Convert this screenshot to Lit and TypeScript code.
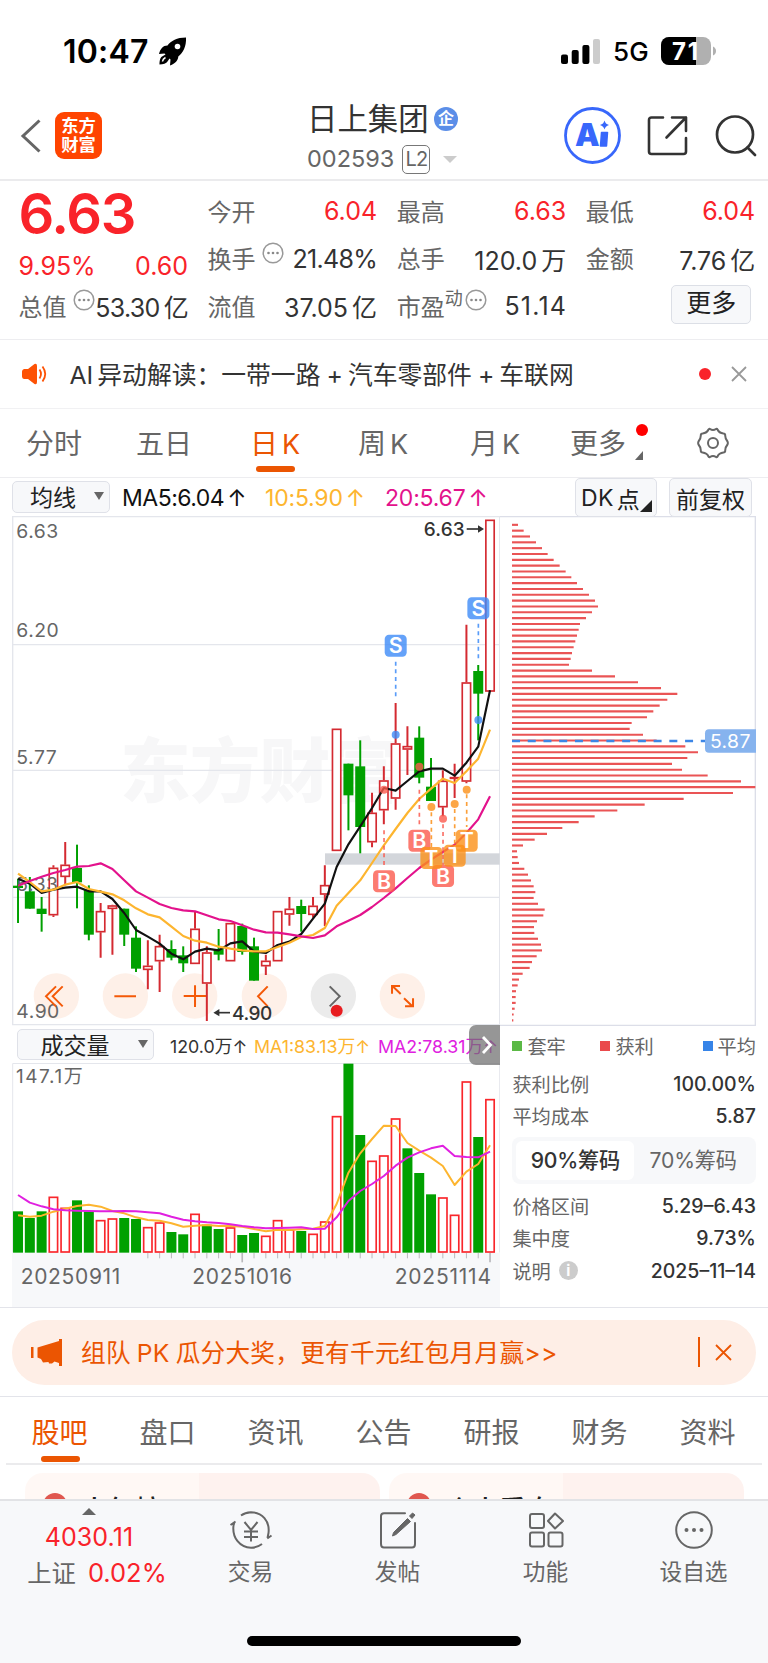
import { LitElement, html, css, svg } from "lit";
import { customElement } from "lit/decorators.js";

const baseFont = css`
  :host { display: block; font-family: Inter, "Noto Sans CJK SC", sans-serif; color: #333; }
  * { box-sizing: border-box; }
  svg { display: block; flex: none; }
  text { font-family: Inter, "Noto Sans CJK SC", sans-serif; }
`;

const STEP = 35.4;
const cx = (i: number) => 54 + STEP * i;
const line = (ys: number[]) => ys.map((y, i) => `${cx(i).toFixed(1)},${y}`).join(" ");

/* [rising, high, bodyTop, bodyBottom, low] in chart units */
const candles: [number, number, number, number, number][] = [
  [0, 1105, 1126, 1133, 1238], [0, 1100, 1143, 1195, 1195], [0, 1160, 1195, 1211, 1264], [1, 1065, 1072, 1215, 1220],
  [1, 995, 1063, 1100, 1125], [0, 1003, 1073, 1116, 1194], [0, 1125, 1138, 1273, 1290], [1, 1178, 1202, 1266, 1342],
  [1, 1183, 1185, 1196, 1333], [0, 1195, 1195, 1273, 1307], [0, 1248, 1282, 1375, 1385], [1, 1290, 1366, 1379, 1437],
  [1, 1273, 1307, 1353, 1445], [0, 1290, 1316, 1342, 1350], [0, 1308, 1335, 1359, 1385], [1, 1205, 1255, 1361, 1361],
  [1, 1308, 1326, 1420, 1532], [0, 1256, 1316, 1333, 1350], [1, 1238, 1238, 1353, 1353], [0, 1240, 1247, 1325, 1333],
  [0, 1282, 1308, 1411, 1411], [1, 1333, 1351, 1368, 1394], [1, 1202, 1202, 1353, 1353], [1, 1160, 1195, 1213, 1246],
  [0, 1168, 1187, 1211, 1264], [1, 1160, 1186, 1214, 1222], [1, 1065, 1124, 1153, 1247], [1, 655, 655, 1022, 1022],
  [0, 760, 760, 855, 960], [0, 690, 768, 950, 1029], [1, 847, 907, 996, 1011], [1, 768, 810, 900, 942],
  [1, 578, 699, 865, 898], [1, 648, 707, 718, 794], [0, 648, 682, 802, 819], [0, 743, 829, 872, 872],
  [1, 780, 811, 891, 918], [1, 760, 800, 805, 863], [1, 343, 516, 814, 819], [0, 464, 482, 550, 690], [1, 28, 28, 544, 544],
];
const ma5 = [1105, 1120, 1148, 1138, 1132, 1129, 1143, 1143, 1166, 1208, 1259, 1279, 1300, 1330, 1347, 1324, 1315, 1320, 1299, 1293, 1324, 1328, 1304, 1294, 1271, 1225, 1180, 1070, 1002, 948, 893, 833, 841, 812, 783, 775, 775, 796, 757, 709, 540];
const ma10 = [1090, 1115, 1143, 1138, 1123, 1115, 1136, 1144, 1152, 1170, 1194, 1212, 1221, 1249, 1277, 1291, 1297, 1309, 1315, 1320, 1323, 1323, 1310, 1297, 1280, 1274, 1253, 1186, 1148, 1110, 1058, 1005, 956, 908, 866, 835, 805, 818, 783, 745, 658];
const ma20 = [1126, 1112, 1099, 1088, 1079, 1069, 1067, 1059, 1076, 1110, 1143, 1162, 1181, 1193, 1200, 1203, 1215, 1227, 1232, 1245, 1258, 1266, 1267, 1272, 1278, 1283, 1275, 1248, 1231, 1214, 1190, 1163, 1134, 1103, 1073, 1048, 1025, 1003, 968, 927, 858];

/* [badge letter, x, badge y, dot y, dash start, dash end] */
const marks: [string, number, number, number, number, number][] = [
  ["S", 1187, 406, 673, 454, 566], ["S", 1435, 294, 629, 340, 452],
  ["B", 1152, 1113, 838, 960, 1070], ["B", 1258, 991, 769, 838, 950], ["B", 1329, 1097, 925, 942, 1064],
  ["T", 1294, 1043, 890, 906, 1010], ["T", 1364, 1036, 881, 896, 1000], ["T", 1400, 991, 838, 852, 950],
];
const markColor: Record<string, string> = { S: "#3d8bf8", B: "#fb5a4e", T: "#fb9018" };

const volumes: [number, number][] = [
  [0, 574], [0, 594], [0, 574], [1, 529], [1, 562], [0, 541], [0, 574], [1, 599], [1, 594], [0, 594], [0, 597], [1, 620], [1, 606],
  [0, 636], [0, 643], [1, 580], [0, 614], [0, 627], [1, 621], [0, 645], [0, 639], [1, 646], [1, 599], [1, 627], [0, 633], [1, 640],
  [1, 603], [1, 287], [0, 131], [0, 345], [1, 421], [1, 405], [1, 294], [0, 385], [0, 459], [0, 523], [1, 531], [1, 583], [1, 183], [0, 351], [1, 236],
];
const vma1 = [586, 590, 587, 575, 566, 558, 554, 560, 573, 580, 592, 600, 602, 610, 620, 617, 615, 618, 618, 620, 627, 634, 629, 630, 628, 626, 618, 552, 458, 400, 357, 317, 318, 369, 392, 413, 438, 495, 455, 432, 376];
const vma2 = [525, 548, 559, 568, 571, 572, 573, 574, 574, 573, 574, 577, 580, 590, 599, 604, 607, 609, 613, 618, 622, 625, 624, 623, 622, 627, 626, 592, 543, 513, 492, 468, 437, 413, 397, 385, 377, 408, 411, 412, 395];

const chips = [54, 71, 90, 108, 126, 143, 161, 179, 197, 214, 231, 249, 267, 285, 294, 276, 258, 240, 236, 231, 226, 221, 216, 212, 207, 276, 345, 414, 483, 532, 502, 479, 460, 441, 395, 389, 429, 470, 556, 594, 562, 516, 546, 623, 723, 766, 699, 551, 434, 352, 284, 236, 187, 141, 104, 69, 51, 53, 57, 73, 84, 93, 101, 106, 101, 114, 134, 130, 111, 102, 103, 114, 123, 126, 110, 96, 89, 68, 57, 53, 48, 47, 47, 44, 41, 40];

@customElement("k-chart")
class KChart extends LitElement {
  static styles = [baseFont, css`
    .grid { stroke: #e4e6ec; stroke-width: 4; fill: none; }
    .axis { font-size: 58px; fill: #666; letter-spacing: 1.5px; }
    .peak { font-size: 57px; font-weight: 500; fill: #333; letter-spacing: 1px; }
    .water { font-size: 212px; font-weight: 900; fill: #f7f7f8; }
    .up { fill: #fff; stroke: #d42a31; stroke-width: 5; }
    .upw { stroke: #d42a31; stroke-width: 6; }
    .down { fill: #00a000; }
    .downw { stroke: #00a000; stroke-width: 6; }
    .ma { fill: none; stroke-width: 6.5; stroke-linejoin: round; }
    .badge { font-size: 64px; font-weight: 600; fill: #fff; text-anchor: middle; }
    .ctl { fill: none; stroke: #f45908; stroke-width: 6; }
  `];
  render() {
    return html`<svg width="488.4" height="510" viewBox="36 17 1465 1530">
      <text class="water" x="360" y="860" textLength="840">东方财富</text>
      <path class="grid" d="M38 19H1499V1543H38ZM38 403H1499M38 780H1499M38 1161H1499" />
      <rect x="975" y="1029" width="524" height="34" fill="#d3d6db" />
      ${[169, 376, 584, 793, 1000, 1207].map((x) => svg`<circle cx=${x} cy="1457" r="68" fill=${x === 1000 ? "#ebebeb" : "#fef0e8"} />`)}
      ${candles.map(([up, h, t, b, l], i) => up
        ? svg`<path class="upw" d="M${cx(i)} ${h}V${t}M${cx(i)} ${b}V${l}" /><rect class="up" x=${cx(i) - 12.5} y=${t + 2} width="25" height=${Math.max(b - t - 4, 2)} />`
        : svg`<path class="downw" d="M${cx(i)} ${h}V${l}" /><rect class="down" x=${cx(i) - 15} y=${t} width="30" height=${b - t} />`)}
      <text class="axis" x="49" y="83">6.63</text>
      <text class="axis" x="49" y="381">6.20</text>
      <text class="axis" x="49" y="762">5.77</text>
      <text class="axis" x="49" y="1143">5.33</text>
      <text class="axis" x="49" y="1522">4.90</text>
      <path class="ctl" d="M168 1428L138 1458L168 1488M188 1428L158 1458L188 1488M343 1458H408M551 1457H618M585 1425V1490M803 1428L774 1458L803 1488" />
      <path class="ctl" d="M1202 1451L1178 1428M1176 1450V1427H1200M1212 1464L1237 1488M1239 1464V1488H1215" />
      <path d="M989 1428L1019 1458L989 1488" fill="none" stroke="#666" stroke-width="6" />
      <circle cx="1010" cy="1501" r="18" fill="#e81d20" />
      <polyline class="ma" stroke="#111" points=${line(ma5)} />
      <polyline class="ma" stroke="#fdb52f" points=${line(ma10)} />
      <polyline class="ma" stroke="#e3128c" points=${line(ma20)} />
      <text class="peak" x="1271" y="76" textLength="124">6.63</text>
      <path d="M1400 56H1440" stroke="#333" stroke-width="5" /><path d="M1452 56L1434 45V67Z" fill="#333" />
      <text class="peak" x="696" y="1528" textLength="122">4.90</text>
      <path d="M655 1507H690" stroke="#333" stroke-width="5" /><path d="M640 1507L658 1496V1518Z" fill="#333" />
      ${marks.map(([c, x, y, dot, a, b]) => svg`
        <path d="M${x} ${a}V${b}" stroke=${markColor[c]} stroke-width="5" stroke-dasharray="12 11" opacity=".85" />
        <circle cx=${x} cy=${dot} r="12" fill=${markColor[c]} opacity=".8" />
        <rect x=${x - 33} y=${y - 33} width="66" height="66" rx="13" fill=${markColor[c]} opacity=".8" />
        <text class="badge" x=${x} y=${y + 23}>${c}</text>`)}
    </svg>`;
  }
}

@customElement("volume-chart")
class VolumeChart extends LitElement {
  static styles = [baseFont, css`
    .axis { font-size: 57px; fill: #666; }
    .date { font-size: 63px; fill: #666; }
    .up { fill: #fff; stroke: #f9262b; stroke-width: 5; }
    .down { fill: #00a000; }
    .ma { fill: none; stroke-width: 6; stroke-linejoin: round; }
    .frame { fill: none; stroke: #e4e6ec; stroke-width: 3; }
  `];
  render() {
    return html`<svg width="488.4" height="244" viewBox="36 129 1465 732">
      <path class="frame" d="M38 698V130.5H1499V698" />
      <rect x="36" y="698" width="1464" height="164" fill="#f7f8fa" />
      <text class="axis" x="48" y="190" textLength="200">147.1万</text>
      ${volumes.map(([up, t], i) => up
        ? svg`<rect class="up" x=${cx(i) - 12.5} y=${t + 3} width="25" height=${693 - t} />`
        : svg`<rect class="down" x=${cx(i) - 15} y=${t} width="30" height=${698 - t} />`)}
      <polyline class="ma" stroke="#fdb52f" points=${line(vma1)} />
      <polyline class="ma" stroke="#e020e0" points=${line(vma2)} />
      ${volumes.map((_, i) => i < 11 ? null : svg`<path d="M${cx(i)} 699V${i === 19 || i === 40 ? 727 : 715}" stroke="#b9b9bc" stroke-width=${i === 19 || i === 40 ? 5 : 3} />`)}
      <text class="date" x="62" y="791" textLength="299">20250911</text>
      <text class="date" x="577" y="791" textLength="299">20251016</text>
      <text class="date" x="1184" y="791" textLength="289">20251114</text>
    </svg>`;
  }
}

@customElement("chip-chart")
class ChipChart extends LitElement {
  static styles = [baseFont, css`
    .bar { stroke: #ea5455; stroke-width: 6.4; }
    .tag { font-size: 58px; fill: #fff; }
  `];
  render() {
    return html`<svg width="256" height="510" viewBox="0 17 768 1530">
      <path d="M0 19H766V1545H0" fill="none" stroke="#dcdee8" stroke-width="4" />
      ${chips.map((x, i) => svg`<path class="bar" d="M36 ${43.5 + i * 17.49}H${x}" />`)}
      <path d="M36 692H615" stroke="#3c86e6" stroke-width="7" stroke-dasharray="24 23.2" />
      <path d="M768 657H627Q615 657 615 669V715Q615 727 627 727H768Z" fill="#86b3ee" />
      <text class="tag" x="630" y="713" textLength="121">5.87</text>
    </svg>`;
  }
}

@customElement("app-root")
class AppRoot extends LitElement {
  static styles = [baseFont, css`
    :host { width: 768px; height: 1663px; overflow: hidden; background: #fff; display: flex; flex-direction: column; }
    .row { display: flex; align-items: center; white-space: nowrap; flex: none; }
    .row > * { flex-shrink: 0; }
    .status { height: 85px; padding: 17px 51px 0 63px; color: #000; justify-content: space-between; }
    .time { font-size: 32px; font-weight: 600; width: 86px; letter-spacing: .2px; }
    .rocket { margin-left: 9px; }
    .net { font-size: 26px; font-weight: 500; margin: 0 12px 0 13px; letter-spacing: .3px; width: 36px; }
    .header { height: 96px; border-bottom: 2px solid #ebebed; padding: 7px 11px 0 20px; }
    .logo { width: 47px; height: 47px; border-radius: 9px; background: #ff4400; color: #fff; font-size: 17.3px; font-weight: 700; line-height: 19.5px; text-align: center; padding-top: 4px; margin: -1px 0 0 14px; }
    .titles { width: 160px; margin-left: 205px; padding-top: 9px; }
    .name { font-size: 30.4px; line-height: 38px; gap: 6px; }
    .name span { width: 121px; }
    .ent { width: 24px; height: 24px; border-radius: 50%; background: #5b8ee8; color: #fff; font-size: 16px; line-height: 23px; text-align: center; font-weight: 700; }
    .code { font-size: 23.5px; line-height: 30px; color: #666; height: 42px; letter-spacing: 0; }
    .l2 { border: 1.5px solid #777; border-radius: 5px; height: 29px; width: 28px; margin: 0 13px 0 8px; font-size: 20px; line-height: 27px; text-align: center; letter-spacing: -1px; }
    .tri { border: 7px solid transparent; border-top-color: #ccc; border-bottom: 0; }
    .acts { margin-left: auto; gap: 27px; }
    .ai { width: 57px; height: 57px; margin-right: -1px; }
    .quotes { height: 159px; border-bottom: 1px solid #ededf0; display: grid; grid-template-columns: repeat(4, 169.5px); column-gap: 19.6px; padding: 6px 0 0 18.5px; font-size: 24px; flex: none; }
    .qc { display: flex; flex-direction: column; }
    .q { height: 47.5px; display: flex; justify-content: space-between; align-items: center; white-space: nowrap; color: #333; }
    .q .k { color: #666; display: flex; align-items: center; margin-top: -1px; }
    .q .k svg { margin: -10px 0 0 6px; }
    .red, .q.red { color: #f9232a; }
    .v { font-size: 25px; padding-top: 1px; }
    .v.tight { letter-spacing: -.7px; }
    .v.wide { letter-spacing: 1.2px; margin-right: -1px; }
    .u { margin-left: 4px; }
    .big { height: 60px; font-size: 56px; font-weight: 600; color: #f9232a; line-height: 55px; letter-spacing: -1.3px; }
    .small { height: 35px; padding-top: 1px; }
    .sup { font-size: 18px; margin-top: -16px; }
    .sup + svg { margin-left: 2px !important; }
    .morebtn { border: 1.5px solid #dcdfe6; background: #f7f8fa; border-radius: 5px; width: 80px; height: 39px; line-height: 35px; text-align: center; margin: -2px 4px 0 auto; color: #222; font-size: 25px; }
    .notice { height: 69px; border-bottom: 1px solid #f1f1f3; padding: 0 21px 0 22px; }
    .notice .txt { font-size: 24.8px; margin-left: 21.5px; width: 505px; margin-top: -3px; }
    .notice .txt b { font-weight: 400; margin: 0 5px 0 6px; }
    .notice .txt em { font-style: normal; margin-right: 4px; }
    .dot { width: 12px; height: 12px; border-radius: 50%; background: #f9232a; margin-left: auto; margin-right: 20px; }
    .periods { height: 69px; border-bottom: 1px solid #ededf0; padding-left: 26px; font-size: 28px; color: #666; display: grid; grid-template-columns: 110px 114px 108px 112px 100px 126.5px auto; align-items: center; white-space: nowrap; flex: none; }
    .periods span, .tabs span { position: relative; display: block; width: max-content; }
    .periods span { margin-top: -3px; }
    .periods b { font-weight: 400; padding-left: 4px; font-size: 27px; letter-spacing: -1px; }
    .on { color: #eb5502; }
    .on::after { content: ""; position: absolute; left: 50%; bottom: -10px; width: 39px; height: 6px; margin-left: -19px; border-radius: 3px; background: #eb5502; }
    .reddot { position: absolute; right: -22px; top: 2px; width: 12px; height: 12px; border-radius: 50%; background: #f00; }
    .corner { position: absolute; right: -17px; bottom: 2px; border-left: 8px solid transparent; border-bottom: 9px solid #666; }
    .malines { height: 38px; padding-left: 12px; font-size: 23px; color: #111; align-items: flex-start; }
    .btn { border: 1.5px solid #dfe1e8; background: #f7f8fa; border-radius: 5px; display: flex; align-items: center; justify-content: center; }
    .sel { width: 98px; height: 32px; margin-top: 3px; justify-content: space-between; padding: 0 5px 2px 17px; color: #222; }
    .down { border: 5px solid transparent; border-top: 8px solid #666; border-bottom: 0; }
    .ma { line-height: 40px; height: 38px; letter-spacing: -.5px; }
    .ma s { text-decoration: none; margin-left: 3px; }
    .m5 { width: 126px; margin-left: 12px; } .m10 { width: 101px; margin-left: 17px; color: #fdb52f; letter-spacing: -.2px; } .m20 { width: 100px; margin-left: 19px; color: #e3128c; letter-spacing: -.2px; }
    .tall { height: 39px; font-size: 23px; color: #222; position: relative; }
    .dk { width: 82px; margin-left: 90px; justify-content: flex-start; padding-left: 5px; letter-spacing: .3px; } .fq { width: 83px; margin-left: 12px; }
    .dk u { text-decoration: none; margin-left: 3px; }
    .dkc { position: absolute; right: 4px; bottom: 4px; border-left: 12px solid transparent; border-bottom: 12px solid #222; }
    .charts { display: grid; grid-template-columns: 500.4px 267.6px; height: 792px; flex: none; border-bottom: 1.5px solid #e3e4ea; }
    .left { padding-left: 12px; }
    .volhead { height: 37.3px; font-size: 17.8px; padding-left: 4.5px; color: #333; position: relative; }
    .vsel { width: 137px; height: 31.5px; font-size: 23px; padding: 0 5px 2px 23px; justify-content: space-between; color: #222; }
    .v0 { margin-left: 16.500px; width: 75px; } .v1 { margin-left: 9px; width: 113px; color: #fdb52f; } .v2 { margin-left: 11px; width: 116px; color: #e020e0; }
    .next { position: absolute; right: 0; top: -1px; width: 31.5px; height: 40px; background: rgba(110,110,110,.72); border-radius: 7px 0 0 7px; padding: 11px 0 0 12px; }
    .right { display: flex; flex-direction: column; }
    .info { padding: 0 12px 0 12px; font-size: 19.2px; color: #666; }
    .legend { height: 42px; display: grid; grid-template-columns: 88px 1fr auto; padding-bottom: 2px; }
    .legend span { display: flex; align-items: center; gap: 5px; }
    .legend i { width: 10px; height: 10px; }
    .g { background: #5bb946; } .r { background: #ea4a4c; } .b { background: #3684e8; }
    .kv { height: 31.7px; justify-content: space-between; }
    .kv b { font-weight: 500; color: #333; font-size: 19.5px; }
    .seg { height: 47px; margin: 6px 0 6px; background: #f7f8fa; border-radius: 8px; padding: 4px; font-size: 21.2px; display: grid; grid-template-columns: 118px 1fr; }
    .seg span { line-height: 39px; text-align: center; border-radius: 6px; white-space: nowrap; letter-spacing: -.2px; }
    .seg .act { background: #fff; color: #333; font-weight: 500; }
    .expl { height: 34px; }
    .expl span { display: flex; align-items: center; gap: 8px; }
    .i { width: 19px; height: 19px; border-radius: 50%; background: #ccc; color: #fff; font-style: normal; font-weight: 700; font-size: 15px; line-height: 19px; text-align: center; }
    .promo { height: 89px; border-bottom: 1.5px solid #e3e4ea; padding: 0 12px; }
    .pill { width: 743.5px; height: 65px; border-radius: 32.5px; background: #feeee6; color: #eb5502; font-size: 24.7px; padding: 0 24px 0 19px; }
    .pill .txt { width: 485px; margin: -2px 0 0 18px; letter-spacing: .22px; }
    .pill .txt b { font-weight: 400; margin: 0 6px; }
    .bar { width: 1.5px; height: 30px; background: #eb5502; margin: 0 15px 0 auto; }
    .tabs { height: 68px; margin: 0 6px; border-bottom: 2px solid #ebebed; padding: 1px 0 0 25.5px; font-size: 28px; color: #666; display: grid; grid-template-columns: repeat(7, 108px); align-items: center; flex: none; }
    .tabs .on::after { bottom: -11px; }
    .cards { height: 34px; padding: 8px 24px 0 25px; display: grid; grid-template-columns: 355px 355px; gap: 9px; overflow: hidden; flex: none; }
    .card { height: 80px; border-radius: 18px; background: linear-gradient(90deg, #fff8f5 0 49%, #fef2ef 49%); padding: 20px 0 0 18px; display: flex; gap: 14px; font-size: 27px; line-height: 36px; font-weight: 500; color: #222; }
    .card i { width: 24px; height: 24px; border-radius: 50%; background: #e0574f; }
    .bottom { height: 164px; border-top: 2px solid #e2e3e6; background: #f7f8fa; display: flex; flex-direction: column; flex: none; align-items: center; color: #666; font-size: 22.7px; }
    .nav { width: 768px; height: 135px; display: grid; grid-template-columns: 178px 145px 149px 147px 149px; }
    .nav div { display: flex; flex-direction: column; align-items: center; }
    .nav div > svg { margin-top: 10px; }
    .nav div > span { line-height: 32px; margin-top: 7px; }
    .upt { border: 7px solid transparent; border-bottom: 7px solid #666; border-top: 0; margin-top: 7px; }
    .nav .idx > span { margin: 7px 0 0; line-height: 31px; white-space: nowrap; font-size: 25px; }
    .nav .idx > .num { letter-spacing: .1px; }
    .nav .idx > .sz { margin: 4px 0 0 16px; font-size: 24.3px; }
    .sz .red { margin-left: 12px; font-size: 25.5px; }
    .home { width: 274px; height: 10px; border-radius: 5px; background: #000; }
  `];

  info() {
    return html`<svg width="22" height="22" viewBox="0 0 22 22"><circle cx="11" cy="11" r="9.8" fill="none" stroke="#999" stroke-width="1.5" /><g fill="#888"><circle cx="6.5" cy="11" r="1.3" /><circle cx="11" cy="11" r="1.3" /><circle cx="15.5" cy="11" r="1.3" /></g></svg>`;
  }

  q(k: string, v: string, cls = "", info = false, sup = "", unit = "") {
    return html`<div class="q"><span class="k">${k}${sup ? html`<span class="sup">${sup}</span>` : ""}${info ? this.info() : ""}</span><span class="v ${cls}">${v}${unit ? html`<span class="u">${unit}</span>` : ""}</span></div>`;
  }

  render() {
    return html`
      <div class="row status">
        <div class="row"><span class="time">10:47</span>
          <svg class="rocket" width="29" height="29" viewBox="0 0 29 29"><path d="M28 .5C19 .5 13 4 9.5 8.5C5 8.5 2.500 11.500 1 17L6.500 16.500L7.500 17.500L4.500 19.200C2 20.500 1.500 24 1.500 27.500C5 27.300 8.500 26.500 9.500 24.500L11.500 21.500L12.500 22.500L12 28.500C17.500 26.500 20 23.500 20.300 19.500C25 16 28.500 9.500 28 .5Z" fill="#000" /><circle cx="19.500" cy="9.500" r="2.800" fill="#fff" /><path d="M4.500 24.500C4.700 22.500 5.500 21.500 7.500 20.500" stroke="#fff" stroke-width="1.500" fill="none" /></svg>
        </div>
        <div class="row">
          <svg width="39" height="25" viewBox="0 0 39 25"><rect y="15.500" width="7" height="9.500" rx="2" /><rect x="10.700" y="11" width="7" height="14" rx="2" /><rect x="21.400" y="6" width="7" height="19" rx="2" /><rect x="32" width="7" height="25" rx="2" fill="#ccc" /></svg>
          <span class="net">5G</span>
          <svg width="56" height="28" viewBox="0 0 56 28"><clipPath id="bat"><rect width="50" height="28" rx="8" /></clipPath><g clip-path="url(#bat)"><rect width="50" height="28" fill="#b0b0b0" /><rect width="35" height="28" /></g><path d="M52 9.500Q55 11 55 14T52 18.500Z" fill="#b0b0b0" /><text x="11" y="22.500" font-size="24" font-weight="700" fill="#fff" textLength="26">71</text></svg>
        </div>
      </div>

      <div class="row header">
        <svg width="21" height="34" viewBox="0 0 21 34"><path d="M19.500 1.500L3 17L19.500 32.500" fill="none" stroke="#666" stroke-width="3" /></svg>
        <div class="logo">东方<br />财富</div>
        <div class="titles">
          <div class="row name"><span>日上集团</span><div class="ent">企</div></div>
          <div class="row code">002593<span class="l2">L2</span><i class="tri"></i></div>
        </div>
        <div class="row acts">
          <svg class="ai" viewBox="0 0 57 57"><circle cx="28.500" cy="28.500" r="27" fill="#fff" stroke="#3867fb" stroke-width="2.800" /><text x="11" y="39" font-size="31" font-weight="900" fill="#3867fb" textLength="21">A</text><path d="M37.500 25.500H43.500L42.500 39H36.500Z" fill="#3867fb" stroke="#3867fb" stroke-width="1.500" stroke-linejoin="round" /><path d="M40.500 13.500Q41.300 17 45 18Q41.300 19 40.500 22.500Q39.700 19 36 18Q39.700 17 40.500 13.500Z" fill="#3867fb" /></svg>
          <svg width="41" height="41" viewBox="0 0 41 41" fill="none" stroke="#333" stroke-width="2.600" stroke-linecap="round" stroke-linejoin="round"><path d="M16 2.500H4.500Q2 2.500 2 5V36.500Q2 39 4.500 39H36.500Q39 39 39 36.500V23M25 2.500H39V16M39 2.500L19.500 22.500" /></svg>
          <svg width="42" height="42" viewBox="0 0 42 42" fill="none" stroke="#333" stroke-width="2.700" stroke-linecap="round"><circle cx="20" cy="19.500" r="18" /><path d="M32.500 32.500L40 40" /></svg>
        </div>
      </div>

      <div class="quotes">
        <div class="qc"><div class="big">6.63</div><div class="q small red"><span class="v">9.95%</span><span class="v">0.60</span></div>${this.q("总值", "53.30", "tight", true, "", "亿")}</div>
        <div class="qc">${this.q("今开", "6.04", "red")}${this.q("换手", "21.48%", "tight", true)}${this.q("流值", "37.05", "", false, "", "亿")}</div>
        <div class="qc">${this.q("最高", "6.63", "red")}${this.q("总手", "120.0", "", false, "", "万")}${this.q("市盈", "51.14", "wide", true, "动")}</div>
        <div class="qc">${this.q("最低", "6.04", "red")}${this.q("金额", "7.76", "", false, "", "亿")}<div class="q"><div class="morebtn">更多</div></div></div>
      </div>

      <div class="row notice">
        <svg width="26" height="22" viewBox="0 0 26 22"><path d="M0 8.500Q0 6.500 2 6H6L12.500 1Q15 0 15 3V19Q15 22 12.500 21L6 16H2Q0 15.500 0 13.500Z" fill="#fd5205" /><path d="M17.500 6.500Q20.500 11 17.500 15.500M20.500 3.500Q26 11 20.500 18.500" fill="none" stroke="#fd5205" stroke-width="1.800" /></svg>
        <span class="txt"><em>AI</em>异动解读：一带一路<b>+</b>汽车零部件<b>+</b>车联网</span>
        <i class="dot"></i>
        <svg width="16" height="16" viewBox="0 0 16 16"><path d="M1 1L15 15M15 1L1 15" stroke="#999" stroke-width="1.800" /></svg>
      </div>

      <div class="periods">
        <span>分时</span><span>五日</span><span class="on">日<b>K</b></span><span>周<b>K</b></span><span>月<b>K</b></span>
        <span>更多<i class="reddot"></i><i class="corner"></i></span>
        <svg width="32" height="32" viewBox="0 0 32 32" fill="none" stroke="#666" stroke-width="2" stroke-linejoin="round"><path d="M11.500 2.500Q12 1.500 13 2Q16 4 19 2Q20 1.500 20.500 2.500Q22 6 26.500 6.500Q28 6.500 28.200 8Q28 11.500 30.500 14.500Q31.200 16 30.500 17.500Q28 20.500 28.200 24Q28 25.500 26.500 25.500Q22 26 20.500 29.500Q20 30.500 19 30Q16 28 13 30Q12 30.500 11.500 29.500Q10 26 5.500 25.500Q4 25.500 3.800 24Q4 20.500 1.500 17.500Q.8 16 1.500 14.500Q4 11.500 3.800 8Q4 6.500 5.500 6.500Q10 6 11.500 2.500Z" /><circle cx="16" cy="16" r="5" /></svg>
      </div>

      <div class="row malines">
        <div class="btn sel">均线<i class="down"></i></div>
        <span class="ma m5">MA5:6.04<s>↑</s></span><span class="ma m10">10:5.90<s>↑</s></span><span class="ma m20">20:5.67<s>↑</s></span>
        <div class="btn tall dk">DK<u>点</u><i class="dkc"></i></div><div class="btn tall fq">前复权</div>
      </div>

      <div class="charts">
        <div class="left">
          <k-chart></k-chart>
          <div class="row volhead">
            <div class="btn vsel">成交量<i class="down"></i></div>
            <span class="v0">120.0万↑</span><span class="v1">MA1:83.13万↑</span><span class="v2">MA2:78.31万↑</span>
            <div class="next"><svg width="12" height="18" viewBox="0 0 12 18"><path d="M2 1L9.500 9L2 17" fill="none" stroke="#fff" stroke-width="2.800" /></svg></div>
          </div>
          <volume-chart></volume-chart>
        </div>
        <div class="right">
          <chip-chart></chip-chart>
          <div class="info">
            <div class="legend"><span><i class="g"></i>套牢</span><span><i class="r"></i>获利</span><span><i class="b"></i>平均</span></div>
            <div class="row kv"><span>获利比例</span><b>100.00%</b></div>
            <div class="row kv"><span>平均成本</span><b>5.87</b></div>
            <div class="seg"><span class="act">90%筹码</span><span>70%筹码</span></div>
            <div class="row kv"><span>价格区间</span><b>5.29–6.43</b></div>
            <div class="row kv"><span>集中度</span><b>9.73%</b></div>
            <div class="row kv expl"><span>说明<i class="i">i</i></span><b>2025–11–14</b></div>
          </div>
        </div>
      </div>

      <div class="row promo"><div class="row pill">
        <svg width="32" height="27" viewBox="0 0 32 27" fill="#eb5502"><rect y="8" width="2.500" height="11" /><path d="M6.500 8.500L28 2V0H31V27H28V24L23.500 22.500L21 24.500H18L17.500 23L12 23.500L10 20L6.500 18.500Z" /></svg>
        <span class="txt">组队<b>PK</b>瓜分大奖，更有千元红包月月赢&gt;&gt;</span>
        <i class="bar"></i>
        <svg width="17" height="17" viewBox="0 0 17 17"><path d="M1 1L16 16M16 1L1 16" stroke="#eb5502" stroke-width="1.800" /></svg>
      </div></div>

      <div class="tabs"><span class="on">股吧</span><span>盘口</span><span>资讯</span><span>公告</span><span>研报</span><span>财务</span><span>资料</span></div>
      <div class="cards"><div class="card"><i></i>人气榜</div><div class="card"><i></i>个人看盘</div></div>

      <div class="bottom">
        <div class="nav">
          <div class="idx"><i class="upt"></i><span class="red num">4030.11</span><span class="sz">上证<span class="red">0.02%</span></span></div>
          <div><svg width="44" height="38" viewBox="0 0 44 38" fill="none" stroke="#666" stroke-width="2"><path d="M12 4.500Q16 1.500 22 1.200C33 1.200 41 10 39.500 22L38.500 27M42.500 24.500L38.300 27.500M33 33Q28 36.800 22 36.800C11 36.500 3 27 4.500 14.500L5.500 11M1.500 14L6.500 10.500M15.500 11L22 19L28.500 11M15 20.500H29M15 26H29M22 19V30.500" /></svg><span>交易</span></div>
          <div><svg width="38" height="38" viewBox="0 0 38 38" fill="none" stroke="#666" stroke-width="2"><path d="M26 2.200H5Q2 2.200 2 5V33Q2 36.500 5 36.500H33Q36 36.500 36 33V12" stroke-linecap="round" /><path d="M14.500 21.500L28.500 7.500L31.500 10.500L17 23.500L13.500 25ZM30.500 5L33.500 2L36 4L33 7.500Z" fill="#666" stroke-width="1" /></svg><span>发帖</span></div>
          <div><svg width="36" height="38" viewBox="0 0 36 38" fill="none" stroke="#666" stroke-width="2"><rect x="2" y="3" width="14" height="14" rx="2" /><rect x="2" y="21.500" width="14" height="14" rx="2" /><rect x="20.500" y="21.500" width="14" height="14" rx="2" /><path d="M27 2.500L35 10L27 17.500L20 10Z" stroke-linejoin="round" /></svg><span>功能</span></div>
          <div><svg width="38" height="38" viewBox="0 0 38 38"><circle cx="19" cy="19" r="17.800" fill="none" stroke="#666" stroke-width="2" /><g fill="#666"><circle cx="11.500" cy="19" r="2" /><circle cx="19" cy="19" r="2" /><circle cx="26.500" cy="19" r="2" /></g></svg><span>设自选</span></div>
        </div>
        <div class="home"></div>
      </div>
    `;
  }
}
